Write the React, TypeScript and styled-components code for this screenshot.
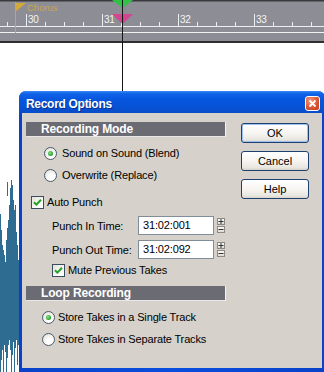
import React from "react";
import styled, { createGlobalStyle } from "styled-components";

const Global = createGlobalStyle`
  html, body { margin: 0; padding: 0; background: #fff; overflow: hidden; }
  body { font-family: "Liberation Sans", Arial, sans-serif; }
  #root { width: 324px; height: 372px; }
`;

const Stage = styled.div`
  position: relative;
  width: 324px;
  height: 372px;
  overflow: hidden;
  background: #fff;
  display: flex;
  flex-direction: column;
`;

const RulerSvg = styled.svg`
  display: block;
  flex: 0 0 43px;
`;

const Track = styled.div`
  flex: 1;
  display: flex;
  background: #fff;
`;

const WaveSvg = styled.svg`
  display: block;
  flex: 0 0 19px;
`;

const Playhead = styled.div`
  position: absolute;
  left: 122px;
  top: 0;
  width: 1px;
  height: 92px;
  background: #161616;
`;

const Dialog = styled.div`
  position: absolute;
  left: 19px;
  top: 91px;
  width: 306px;
  height: 281px;
  display: flex;
  flex-direction: column;
  background: linear-gradient(90deg, #0842c8, #0a4ede 50%, #0842c8);
  border-radius: 7px 7px 0 0;
  overflow: hidden;
`;

const TitleBar = styled.div`
  flex: 0 0 22px;
  display: flex;
  align-items: center;
  justify-content: space-between;
  padding: 2px 5px 0 7px;
  box-sizing: border-box;
  background: linear-gradient(
    180deg,
    #3b8cf5 0%,
    #0f63e8 12%,
    #0656dd 40%,
    #0653d6 70%,
    #0a4cc6 100%
  );
`;

const TitleText = styled.span`
  color: #fff;
  font-weight: bold;
  font-size: 12px;
  letter-spacing: -0.3px;
  padding-top: 2px;
  text-shadow: 1px 1px 0 #0b2e8a;
`;

const CloseBtn = styled.div`
  width: 15px;
  height: 15px;
  box-sizing: border-box;
  border: 1px solid #fff;
  border-radius: 3px;
  background: radial-gradient(circle at 35% 30%, #f19a7e, #dc5532 55%, #c13c1b);
  display: flex;
  align-items: center;
  justify-content: center;
`;

const Body = styled.div`
  flex: 1;
  margin: 0 3px 4px 3px;
  background: #d6d2cb;
  display: flex;
  padding: 9px 0 0 4px;
  box-sizing: border-box;
`;

const LeftCol = styled.div`
  width: 200px;
  display: flex;
  flex-direction: column;
`;

const RightCol = styled.div`
  margin-left: 15px;
  padding-top: 1px;
  display: flex;
  flex-direction: column;
  gap: 8px;
`;

const SectionHeader = styled.div<{ $mt?: number }>`
  height: 15px;
  margin-top: ${(p) => p.$mt ?? 0}px;
  background: #6b6b74;
  border-right: 1px solid #f4f4f4;
  border-bottom: 1px solid #e8e8e8;
  box-sizing: border-box;
  color: #fff;
  font-weight: bold;
  font-size: 12px;
  letter-spacing: -0.15px;
  line-height: 15px;
  padding-left: 15px;
`;

const OptionRow = styled.div<{ $mt: number; $indent: number; $gap?: number }>`
  height: 16px;
  margin-top: ${(p) => p.$mt}px;
  padding-left: ${(p) => p.$indent}px;
  display: flex;
  align-items: center;
  gap: ${(p) => p.$gap ?? 4}px;
  font-size: 11px;
  letter-spacing: -0.15px;
  color: #000;
`;

const RadioCircle = styled.span<{ $on?: boolean }>`
  width: 13px;
  height: 13px;
  box-sizing: border-box;
  border-radius: 50%;
  border: 1px solid #4a5a6c;
  background: radial-gradient(circle at 65% 70%, #ffffff 30%, #e3e2dc 80%, #cfcdc6);
  display: flex;
  align-items: center;
  justify-content: center;
  flex: 0 0 auto;
  &::after {
    content: "";
    display: ${(p) => (p.$on ? "block" : "none")};
    width: 5px;
    height: 5px;
    border-radius: 50%;
    background: radial-gradient(circle at 40% 40%, #8fe08f, #21a121 70%);
  }
`;

const CheckBox = styled.span`
  width: 13px;
  height: 13px;
  box-sizing: border-box;
  border: 1px solid #3a4c5e;
  background: linear-gradient(135deg, #e4e2da, #ffffff 80%);
  display: flex;
  align-items: center;
  justify-content: center;
  flex: 0 0 auto;
`;

const FieldRow = styled.div<{ $mt: number }>`
  height: 19px;
  margin-top: ${(p) => p.$mt}px;
  padding-left: 26px;
  display: flex;
  align-items: center;
  font-size: 11px;
  letter-spacing: -0.15px;
`;

const FieldLabel = styled.span`
  width: 86px;
  flex: 0 0 86px;
`;

const TimeBox = styled.div`
  width: 76px;
  height: 19px;
  box-sizing: border-box;
  border: 1px solid #7f8d99;
  background: #fff;
  padding-left: 4px;
  line-height: 17px;
  font-size: 11px;
  letter-spacing: -0.15px;
`;

const Spinner = styled.div`
  margin-left: 3px;
  display: flex;
  flex-direction: column;
  gap: 1px;
`;

const SpinBtn = styled.div`
  width: 8px;
  height: 7px;
  box-sizing: border-box;
  border: 1px solid #8c8a84;
  background: linear-gradient(#fbfbf8, #dedbd3);
  display: flex;
  align-items: center;
  justify-content: center;
`;

const Button = styled.div<{ $default?: boolean }>`
  width: 68px;
  height: 20px;
  box-sizing: border-box;
  border: 1px solid #1f3f6e;
  border-radius: 3px;
  background: linear-gradient(180deg, #ffffff 0%, #f6f5f1 50%, #e9e7e0 85%, #d9d5cc 100%);
  box-shadow: ${(p) => (p.$default ? "inset 0 0 0 1px #9cc0ef" : "none")};
  display: flex;
  align-items: center;
  justify-content: center;
  font-size: 11px;
  color: #000;
`;

const minorTicks = [7, 45, 64, 83, 121, 140, 159, 197, 216, 235, 273, 292, 311];
const majorTicks = [
  { x: 26, n: "30" },
  { x: 102, n: "31" },
  { x: 178, n: "32" },
  { x: 254, n: "33" },
];

const Ruler = () => (
  <RulerSvg width={324} height={43} viewBox="0 0 324 43">
    <rect x={0} y={0} width={324} height={43} fill="#8d8d95" />
    <rect x={0} y={0} width={324} height={1.5} fill="#3a3a3e" />
    <rect x={0} y={26} width={324} height={1} fill="#eeeef0" />
    <rect x={0} y={32} width={324} height={1} fill="#f2f2f2" />
    <rect x={0} y={41} width={324} height={2} fill="#2f2f33" />
    {minorTicks.map((x) => (
      <rect key={x} x={x} y={22} width={1} height={4} fill="#eeeef0" />
    ))}
    {majorTicks.map((t) => (
      <g key={t.x}>
        <rect x={t.x} y={14} width={1} height={12} fill="#eeeef0" />
        <text
          x={t.x + 2}
          y={23}
          fontSize={10}
          fill="#f4f4f4"
          fontFamily="Liberation Sans, Arial, sans-serif"
          letterSpacing={-0.3}
        >
          {t.n}
        </text>
      </g>
    ))}
    <rect x={15} y={2} width={1} height={31} fill="#c9a54a" />
    <polygon points="15,3 26,3 15,12" fill="#d4a93c" />
    <text
      x={27}
      y={11}
      fontSize={9.5}
      fill="#c9a64e"
      fontFamily="Liberation Sans, Arial, sans-serif"
    >
      Chorus
    </text>
    <polygon points="112,0 133,0 122.5,8" fill="#2fc244" />
    <polygon points="112,14 133,14 122.5,24" fill="#d2458f" />
  </RulerSvg>
);

const wave: [number, number][] = [
  [214, 372],
  [230, 360],
  [245, 350],
  [250, 372],
  [255, 345],
  [262, 352],
  [240, 372],
  [228, 358],
  [220, 345],
  [205, 340],
  [188, 350],
  [180, 372],
  [185, 355],
  [200, 342],
  [210, 372],
  [205, 348],
  [232, 340],
  [245, 365],
  [260, 345],
];

const Waveform = () => (
  <WaveSvg width={19} height={329} viewBox="0 43 19 329">
    {wave.map(([top, bottom], i) => (
      <rect key={i} x={i} y={top} width={1} height={bottom - top} fill="#2e6d91" />
    ))}
    <rect x={7} y={182} width={1} height={14} fill="#2e6d91" />
  </WaveSvg>
);

const Check = () => (
  <svg width={9} height={9} viewBox="0 0 9 9">
    <path d="M1 4.2 L3.4 6.6 L8 1.8" stroke="#21a121" strokeWidth={2} fill="none" />
  </svg>
);

const Plus = () => (
  <svg width={6} height={5} viewBox="0 0 6 5">
    <path d="M0.5 2.5 H5.5 M3 0 V5" stroke="#333" strokeWidth={1} />
  </svg>
);

const Minus = () => (
  <svg width={6} height={5} viewBox="0 0 6 5">
    <path d="M0.5 2.5 H5.5" stroke="#333" strokeWidth={1} />
  </svg>
);

export default function App() {
  return (
    <>
      <Global />
      <Stage>
        <Ruler />
        <Track>
          <Waveform />
        </Track>
        <Playhead />
        <Dialog>
          <TitleBar>
            <TitleText>Record Options</TitleText>
            <CloseBtn>
              <svg width={9} height={9} viewBox="0 0 9 9">
                <path d="M1.5 1.5 L7.5 7.5 M7.5 1.5 L1.5 7.5" stroke="#fff" strokeWidth={1.8} />
              </svg>
            </CloseBtn>
          </TitleBar>
          <Body>
            <LeftCol>
              <SectionHeader>Recording Mode</SectionHeader>
              <OptionRow $mt={8} $indent={18} $gap={5}>
                <RadioCircle $on />
                <span>Sound on Sound (Blend)</span>
              </OptionRow>
              <OptionRow $mt={6} $indent={18} $gap={5}>
                <RadioCircle />
                <span>Overwrite (Replace)</span>
              </OptionRow>
              <OptionRow $mt={11} $indent={5} $gap={3}>
                <CheckBox>
                  <Check />
                </CheckBox>
                <span>Auto Punch</span>
              </OptionRow>
              <FieldRow $mt={6}>
                <FieldLabel>Punch In Time:</FieldLabel>
                <TimeBox>31:02:001</TimeBox>
                <Spinner>
                  <SpinBtn>
                    <Plus />
                  </SpinBtn>
                  <SpinBtn>
                    <Minus />
                  </SpinBtn>
                </Spinner>
              </FieldRow>
              <FieldRow $mt={5}>
                <FieldLabel>Punch Out Time:</FieldLabel>
                <TimeBox>31:02:092</TimeBox>
                <Spinner>
                  <SpinBtn>
                    <Plus />
                  </SpinBtn>
                  <SpinBtn>
                    <Minus />
                  </SpinBtn>
                </Spinner>
              </FieldRow>
              <OptionRow $mt={3} $indent={26} $gap={3}>
                <CheckBox>
                  <Check />
                </CheckBox>
                <span>Mute Previous Takes</span>
              </OptionRow>
              <SectionHeader $mt={8}>Loop Recording</SectionHeader>
              <OptionRow $mt={8} $indent={16} $gap={3}>
                <RadioCircle $on />
                <span>Store Takes in a Single Track</span>
              </OptionRow>
              <OptionRow $mt={6} $indent={16} $gap={3}>
                <RadioCircle />
                <span>Store Takes in Separate Tracks</span>
              </OptionRow>
            </LeftCol>
            <RightCol>
              <Button $default>OK</Button>
              <Button>Cancel</Button>
              <Button>Help</Button>
            </RightCol>
          </Body>
        </Dialog>
      </Stage>
    </>
  );
}
